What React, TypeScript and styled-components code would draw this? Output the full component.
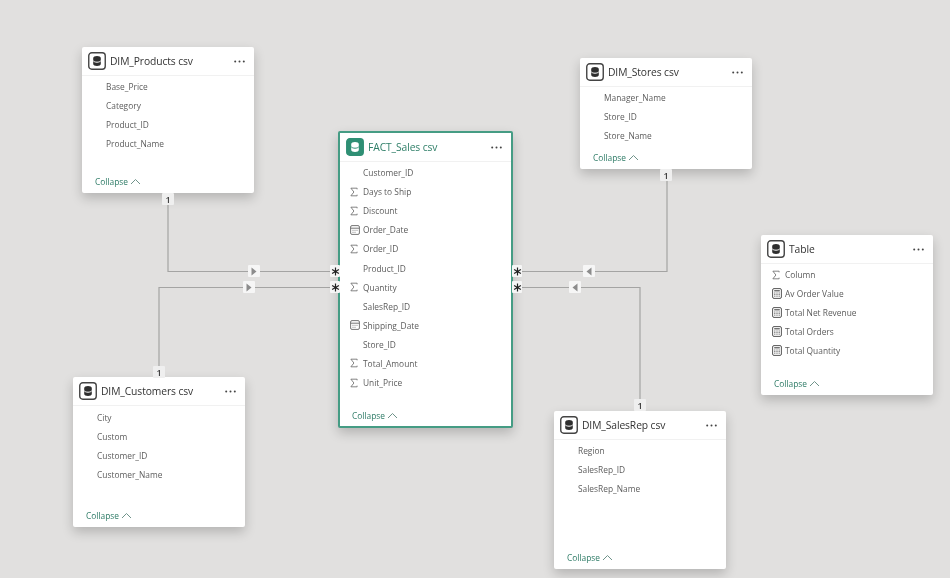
import React from "react";
import styled, { createGlobalStyle } from "styled-components";

const Global = createGlobalStyle`
  html, body { margin: 0; padding: 0; background: #e1e0df; }
  body { font-family: "Open Sans", "Noto Sans", "Liberation Sans", sans-serif; }
`;

const Canvas = styled.div`
  position: relative;
  width: 950px;
  height: 578px;
  overflow: hidden;
  background: #e1e0df;
  filter: blur(0.35px);
`;

const Wires = styled.svg`
  position: absolute;
  inset: 0;
`;

const Card = styled.section<{ $x: number; $y: number; $w: number; $h: number; $active?: boolean }>`
  position: absolute;
  left: ${(p) => p.$x}px;
  top: ${(p) => p.$y}px;
  width: ${(p) => p.$w}px;
  height: ${(p) => p.$h}px;
  box-sizing: border-box;
  display: flex;
  flex-direction: column;
  background: #fff;
  border: ${(p) => (p.$active ? "2px solid #459c84" : "none")};
  border-radius: 2px;
  box-shadow: 0 5px 12px rgba(0, 0, 0, 0.2);
`;

const Header = styled.header`
  flex: none;
  height: 29px;
  box-sizing: border-box;
  padding: 0 9px 0 6px;
  display: flex;
  align-items: center;
  gap: 4px;
  border-bottom: 1px solid #f1f1f1;
`;

const Title = styled.h2<{ $active?: boolean }>`
  flex: 1;
  margin: 0;
  font-size: 10.3px;
  font-weight: 500;
  letter-spacing: -0.1px;
  white-space: nowrap;
  color: ${(p) => (p.$active ? "#2f7f68" : "#333")};
`;

const Rows = styled.ul<{ $top: number }>`
  list-style: none;
  margin: 0;
  padding: ${(p) => p.$top}px 0 0;
`;

const Row = styled.li<{ $active?: boolean }>`
  height: ${(p) => (p.$active ? 19.1 : 19)}px;
  display: flex;
  align-items: center;
  padding-left: ${(p) => (p.$active ? 8 : 9)}px;
  font-size: 8.4px;
  color: #5c5c5c;
  white-space: nowrap;
`;

const IconSlot = styled.span`
  flex: none;
  width: 15px;
  height: 12px;
  display: flex;
  align-items: center;
  padding-left: 2px;
  box-sizing: border-box;
  color: #666;
`;

const Footer = styled.footer<{ $active?: boolean }>`
  margin-top: auto;
  height: ${(p) => (p.$active ? 22 : 23)}px;
  padding-left: ${(p) => (p.$active ? 12 : 13)}px;
  display: flex;
  align-items: center;
  gap: 2px;
  font-size: 8.4px;
  color: #2c7a65;
`;

const Badge = styled.div<{ $x: number; $y: number; $w?: number; $h?: number; $tone?: string }>`
  position: absolute;
  left: ${(p) => p.$x - (p.$w ?? 12) / 2}px;
  top: ${(p) => p.$y - (p.$h ?? 12) / 2}px;
  width: ${(p) => p.$w ?? 12}px;
  height: ${(p) => p.$h ?? 12}px;
  display: flex;
  align-items: center;
  justify-content: center;
  background: ${(p) => p.$tone ?? "#f6f6f6"};
  border-radius: 1px;
  font-size: 9px;
  font-weight: 600;
  color: #3a3a3a;
`;

const TableIcon = ({ active }: { active?: boolean }) => (
  <svg width="18" height="18" viewBox="0 0 18 18" style={{ flex: "none" }}>
    <rect x="0.75" y="0.75" width="16.5" height="16.5" rx="3" fill={active ? "#2f8f74" : "#fff"} stroke={active ? "#2f8f74" : "#444"} strokeWidth="1.4" />
    <path
      d="M5.2 6c0-1.2 1.7-2 3.8-2s3.8.8 3.8 2v6c0 1.2-1.7 2-3.8 2s-3.8-.8-3.8-2z"
      fill={active ? "#fff" : "#2e2e2e"}
    />
    <path d="M5.2 8.8c.7.9 2.1 1.4 3.8 1.4s3.1-.5 3.8-1.4" fill="none" stroke={active ? "#2f8f74" : "#fff"} strokeWidth="1" />
  </svg>
);

const Sigma = () => (
  <svg width="8" height="10" viewBox="0 0 9 10">
    <path d="M8 2V.7H1l3.4 4.3L1 9.3h7V8" fill="none" stroke="currentColor" strokeWidth="0.9" />
  </svg>
);

const Calendar = () => (
  <svg width="10" height="10" viewBox="0 0 10 10">
    <rect x="0.6" y="0.6" width="8.8" height="8.8" rx="1.4" fill="none" stroke="currentColor" strokeWidth="0.9" />
    <path d="M.6 3.2h8.8" stroke="currentColor" strokeWidth="0.9" />
    <path d="M2.5 5.3h1M4.5 5.3h1M6.5 5.3h1M2.5 7.3h1M4.5 7.3h1" stroke="currentColor" strokeWidth="0.8" />
  </svg>
);

const Measure = () => (
  <svg width="10" height="11" viewBox="0 0 10 11">
    <rect x="0.6" y="0.6" width="8.8" height="9.8" rx="1.4" fill="none" stroke="#444" strokeWidth="0.9" />
    <path d="M2.2 2.8h5.6" stroke="#444" strokeWidth="1.1" />
    <path d="M2.2 5h1.2M4.4 5h1.2M6.6 5h1.2M2.2 6.6h1.2M4.4 6.6h1.2M6.6 6.6h1.2M2.2 8.2h1.2M4.4 8.2h1.2M6.6 8.2h1.2" stroke="#444" strokeWidth="0.8" />
  </svg>
);

const Dots = () => (
  <svg width="11" height="3" viewBox="0 0 11 3" style={{ flex: "none" }}>
    <circle cx="1.2" cy="1.5" r="1" fill="#444" />
    <circle cx="5.5" cy="1.5" r="1" fill="#444" />
    <circle cx="9.8" cy="1.5" r="1" fill="#444" />
  </svg>
);

const Chevron = () => (
  <svg width="11" height="7" viewBox="0 0 11 7">
    <path d="M1 6l4.5-4.5L10 6" fill="none" stroke="#6f938a" strokeWidth="1" />
  </svg>
);

const Star = () => (
  <svg width="9" height="9" viewBox="0 0 9 9">
    <path d="M4.5.6v7.8M1.1 2.5l6.8 4M7.9 2.5l-6.8 4" stroke="#222" strokeWidth="1.2" />
  </svg>
);

const Arrow = ({ left }: { left?: boolean }) => (
  <svg width="6" height="9" viewBox="0 0 6 9">
    <path d={left ? "M5.5.5v8L.5 4.5z" : "M.5.5v8l5-4z"} fill="#8c8c8c" />
  </svg>
);

type Kind = "none" | "sigma" | "calendar" | "measure";
type Field = [string, Kind];

const icons: Record<Kind, React.ReactNode> = {
  none: null,
  sigma: <Sigma />,
  calendar: <Calendar />,
  measure: <Measure />,
};

const plain = (...names: string[]): Field[] => names.map((n) => [n, "none"]);

const cards: { title: string; x: number; y: number; w: number; h: number; top: number; active?: boolean; fields: Field[] }[] = [
  { title: "DIM_Products csv", x: 82, y: 47, w: 172, h: 146, top: 1, fields: plain("Base_Price", "Category", "Product_ID", "Product_Name") },
  {
    title: "FACT_Sales csv", x: 338, y: 131, w: 175, h: 297, top: 1, active: true,
    fields: [
      ["Customer_ID", "none"], ["Days to Ship", "sigma"], ["Discount", "sigma"], ["Order_Date", "calendar"],
      ["Order_ID", "sigma"], ["Product_ID", "none"], ["Quantity", "sigma"], ["SalesRep_ID", "none"],
      ["Shipping_Date", "calendar"], ["Store_ID", "none"], ["Total_Amount", "sigma"], ["Unit_Price", "sigma"],
    ],
  },
  { title: "DIM_Stores csv", x: 580, y: 58, w: 172, h: 111, top: 1, fields: plain("Manager_Name", "Store_ID", "Store_Name") },
  {
    title: "Table", x: 761, y: 235, w: 172, h: 160, top: 1,
    fields: [["Column", "sigma"], ["Av Order Value", "measure"], ["Total Net Revenue", "measure"], ["Total Orders", "measure"], ["Total Quantity", "measure"]],
  },
  { title: "DIM_Customers csv", x: 73, y: 377, w: 172, h: 150, top: 2, fields: plain("City", "Custom", "Customer_ID", "Customer_Name") },
  { title: "DIM_SalesRep csv", x: 554, y: 411, w: 172, h: 158, top: 1, fields: plain("Region", "SalesRep_ID", "SalesRep_Name") },
];

const wires = ["M168 193V271.5H338", "M159 377V287.5H338", "M667 168V271.5H513", "M640 411V287.5H513"];
const ones: [number, number][] = [[168, 199], [159, 372], [666, 175], [640, 405]];
const stars: [number, number][] = [[335, 271], [335, 287], [517, 271], [517, 287]];
const arrows: [number, number, boolean][] = [[254, 271, false], [249, 287, false], [589, 271, true], [575, 287, true]];

export default function App() {
  return (
    <Canvas>
      <Global />
      <Wires width="950" height="578" viewBox="0 0 950 578">
        {wires.map((d) => (
          <path key={d} d={d} fill="none" stroke="#a4a4a3" strokeWidth="1.2" />
        ))}
      </Wires>
      {cards.map((c) => (
        <Card key={c.title} $x={c.x} $y={c.y} $w={c.w} $h={c.h} $active={c.active}>
          <Header>
            <TableIcon active={c.active} />
            <Title $active={c.active}>{c.title}</Title>
            <Dots />
          </Header>
          <Rows $top={c.top}>
            {c.fields.map(([name, kind]) => (
              <Row key={name} $active={c.active}>
                <IconSlot>{icons[kind]}</IconSlot>
                {name}
              </Row>
            ))}
          </Rows>
          <Footer $active={c.active}>
            Collapse <Chevron />
          </Footer>
        </Card>
      ))}
      {ones.map(([x, y]) => (
        <Badge key={`o${x}`} $x={x} $y={y} $tone="#efefef">1</Badge>
      ))}
      {stars.map(([x, y]) => (
        <Badge key={`s${x}${y}`} $x={x} $y={y} $w={10} $h={12}><Star /></Badge>
      ))}
      {arrows.map(([x, y, left]) => (
        <Badge key={`a${x}`} $x={x} $y={y}><Arrow left={left} /></Badge>
      ))}
    </Canvas>
  );
}
